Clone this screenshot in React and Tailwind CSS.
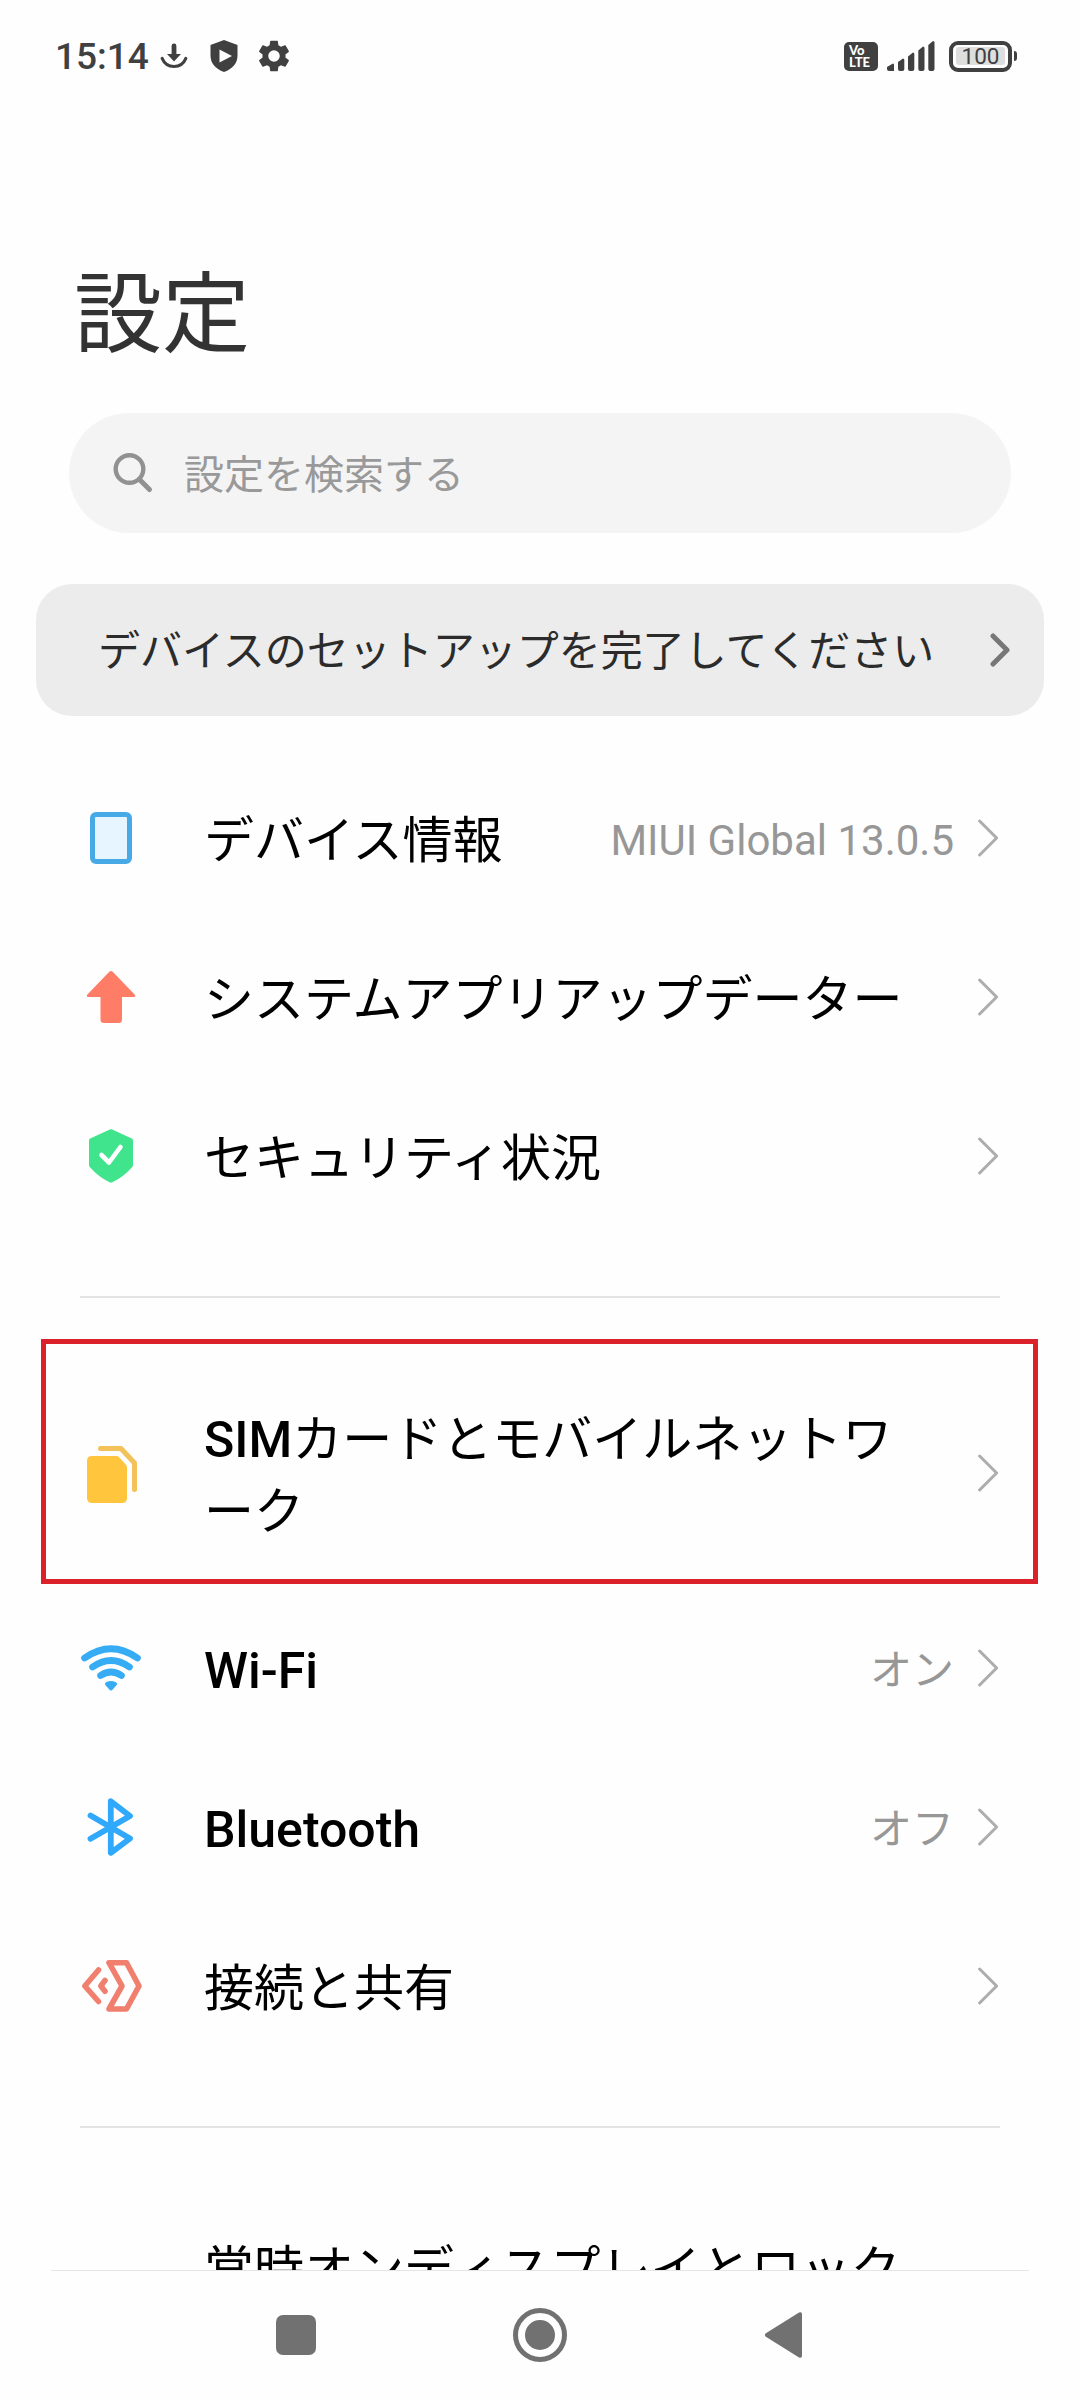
const DeviceIcon = () => (
  <svg viewBox="0 0 64 64" className="h-16 w-16">
    <rect x="13.5" y="8.5" width="37" height="47" rx="3.5" fill="#e6f5ff" stroke="#47a9e5" strokeWidth="5" />
  </svg>
)

const UpdateIcon = () => (
  <svg viewBox="0 0 64 64" className="h-16 w-16" fill="#ff7c66">
    <path d="M30.3 6.8Q32 5.2 33.7 6.8L55.6 29.4Q57.4 32 54.5 32H43V54.5Q43 58 39.5 58H25Q21.5 58 21.5 54.5V32H9.5Q6.6 32 8.4 29.4Z" />
  </svg>
)

const SecurityIcon = () => (
  <svg viewBox="0 0 64 64" className="h-16 w-16">
    <path
      d="M30.8 5.6Q32 5 33.2 5.6L52.8 14.6Q54 15.2 54 16.6V41Q54 42.6 52.8 43.6Q44 53.5 33.4 58.3Q32 59 30.6 58.3Q20 53.5 11.2 43.6Q10 42.6 10 41V16.6Q10 15.2 11.2 14.6Z"
      fill="#40e48c"
    />
    <path d="M22.5 31L30 38.5L41.5 23" fill="none" stroke="#fff" strokeWidth="4.6" strokeLinecap="round" strokeLinejoin="round" />
  </svg>
)

const SimIcon = () => (
  <svg viewBox="0 0 64 64" className="h-16 w-16">
    <path d="M13 15H37Q39 15 40.4 16.4L46.6 23.2Q48 24.6 48 26.6V57Q48 62 43 62H13Q8 62 8 57V20Q8 15 13 15Z" fill="#ffc53d" />
    <path d="M21.5 7.5H42L55.5 22V48.5" fill="none" stroke="#f3c25a" strokeWidth="5" strokeLinecap="round" strokeLinejoin="round" />
  </svg>
)

const WifiIcon = () => (
  <svg viewBox="0 0 64 64" className="h-16 w-16" fill="none" stroke="#36acf5" strokeWidth="6.8" strokeLinecap="round">
    <path d="M5.6 22Q32 3.5 58.4 22" />
    <path d="M13.6 31Q32 18 50.4 31" />
    <path d="M21.6 39.5Q32 32.5 42.4 39.5" />
    <path d="M28 48Q32 46 36 48L32 52.5Z" strokeWidth="4" strokeLinejoin="round" fill="#36acf5" />
  </svg>
)

const BluetoothIcon = () => (
  <svg viewBox="0 0 64 64" className="h-16 w-16">
    <path
      d="M11.5 20.5L51 43.5L31.8 57.8V6.2L51 21L11.5 43.8"
      fill="none"
      stroke="#30a8fb"
      strokeWidth="5.8"
      strokeLinecap="round"
      strokeLinejoin="round"
    />
  </svg>
)

const ShareIcon = () => (
  <svg
    viewBox="0 0 64 64"
    className="h-16 w-16"
    fill="none"
    stroke="#f17f6e"
    strokeWidth="5.6"
    strokeLinecap="round"
    strokeLinejoin="round"
  >
    <path d="M19.5 16L5.8 32L19.5 47.5" />
    <path d="M26 26.5L21.8 32L26 37.2" />
    <path d="M30 8.7H47.5L60 32L47.5 55H30L43 32Z" />
  </svg>
)

const Chevron = () => (
  <svg
    viewBox="0 0 22 40"
    className="h-10 w-[22px] shrink-0"
    fill="none"
    stroke="#adadad"
    strokeWidth="3"
    strokeLinecap="round"
    strokeLinejoin="round"
  >
    <path d="M1.6 3L18.6 20L1.6 37" />
  </svg>
)

const StatusBar = () => (
  <header className="flex h-28 items-center justify-between pl-[55px] pr-[63px] text-[#404040]">
    <div className="flex items-center">
      <span className="w-[105px] pt-px text-[37px] leading-none font-medium whitespace-nowrap">15:14</span>
      <svg viewBox="0 0 28 26" className="h-[26px] w-7" fill="none" stroke="currentColor" strokeLinecap="round">
        <path d="M14 3V13" strokeWidth="4.8" />
        <path d="M7 11H21L14 18.5Z" fill="currentColor" stroke="none" />
        <path d="M2.2 15.5Q5.5 23.5 14 23.5Q22.5 23.5 25.8 15.5" strokeWidth="3.2" />
      </svg>
      <svg viewBox="0 0 28 34" className="ml-[22px] h-[34px] w-7">
        <path d="M14 1L27.5 6V16.5Q27.5 28 14 33Q.5 28 .5 16.5V6Z" fill="currentColor" />
        <path d="M9.5 10.5L22 17L9.5 23.5Z" fill="#fefefe" />
      </svg>
      <svg viewBox="2 2 20 20" className="ml-5 h-8 w-8" fill="currentColor">
        <path d="M19.14 12.94c.04-.3.06-.61.06-.94s-.02-.64-.07-.94l2.03-1.58a.49.49 0 0 0 .12-.61l-1.92-3.32a.49.49 0 0 0-.59-.22l-2.39.96a7.03 7.03 0 0 0-1.62-.94l-.36-2.54A.48.48 0 0 0 13.92 2.4h-3.84a.48.48 0 0 0-.47.41l-.36 2.54c-.59.24-1.13.57-1.62.94l-2.39-.96a.49.49 0 0 0-.59.22L2.74 8.87a.48.48 0 0 0 .12.61l2.03 1.58c-.05.3-.09.63-.09.94s.02.64.07.94l-2.03 1.58a.49.49 0 0 0-.12.61l1.92 3.32c.12.22.37.29.59.22l2.39-.96c.5.38 1.03.7 1.62.94l.36 2.54c.05.24.24.41.48.41h3.84c.24 0 .44-.17.47-.41l.36-2.54a7.03 7.03 0 0 0 1.62-.94l2.39.96c.22.08.47 0 .59-.22l1.92-3.32a.48.48 0 0 0-.12-.61zM12 15.6a3.6 3.6 0 1 1 0-7.2 3.6 3.6 0 0 1 0 7.2z" />
      </svg>
    </div>
    <div className="flex items-center">
      <div className="flex h-[29px] w-[34px] flex-col justify-center rounded-[5px] bg-[#404040] pl-[5px] font-['Lato',sans-serif] text-[13px] leading-[12px] font-black text-white">
        <span>Vo</span>
        <span>LTE</span>
      </div>
      <svg viewBox="0 0 48 30" className="ml-[9px] h-[30px] w-12" fill="currentColor">
        <path d="M0 28V26L6 22.5Q7 22.5 7 24V30H2Q0 30 0 28Z" />
        <path d="M11 21L16 17.5Q17.3 17.5 17.3 19V28Q17.3 30 15.3 30H13Q11 30 11 28Z" />
        <path d="M21 15.5L26 11.5Q27.3 11.5 27.3 13V28Q27.3 30 25.3 30H23Q21 30 21 28Z" />
        <path d="M31.3 9.5L36 5.5Q37.5 5.5 37.5 7V28Q37.5 30 35.5 30H33.3Q31.3 30 31.3 28Z" />
        <path d="M41.3 4L46 0Q47.5 0 47.5 1.5V28Q47.5 30 45.5 30H43.3Q41.3 30 41.3 28Z" />
      </svg>
      <div className="ml-[14px] flex h-[31px] w-[63px] items-center rounded-[9px] border-4 border-[#404040] p-[3px]">
        <span className="flex h-[18px] w-full items-center justify-center rounded-[3px] bg-[#dedede] text-[22.5px] leading-none">
          100
        </span>
      </div>
      <span className="ml-0.5 h-[10px] w-[3px] rounded-r-sm bg-[#404040]" />
    </div>
  </header>
)

const SettingsRow = ({ icon, label, value, chevron = true }) => (
  <li className="flex h-[159px] items-center pr-20 pl-[79px]">
    {icon}
    <span className="ml-[61px] flex-1 pt-[7px] text-[50px] leading-[72px] whitespace-nowrap text-black">{label}</span>
    {value && <span className="mr-6 pt-[7px] text-[42px] leading-none text-[#979797]">{value}</span>}
    {chevron && <Chevron />}
  </li>
)

const Divider = () => <hr className="mx-20 mt-[61px] mb-[59px] h-0.5 border-0 bg-[#e4e4e4]" />

const NavBar = () => (
  <nav className="flex h-[130px] flex-col">
    <div className="mx-[51px] h-px bg-[#e6e6e6]" />
    <div className="flex flex-1 items-center pb-0.5 pl-[276px]">
      <div className="h-10 w-10 rounded-[7px] bg-[#717171]" />
      <div className="ml-[197px] flex h-[54px] w-[54px] items-center justify-center rounded-full border-[5px] border-[#717171]">
        <div className="h-[30px] w-[30px] rounded-full bg-[#717171]" />
      </div>
      <svg viewBox="0 0 38 48" className="ml-[197px] h-12 w-[38px]" fill="#717171">
        <path d="M1.5 22.5L35 1.5Q38 .5 38 3V45Q38 47.5 35 46.5L1.5 25.5Q0 24 1.5 22.5Z" />
      </svg>
    </div>
  </nav>
)

const App = () => {
  return (
    <div
      lang="ja"
      className="h-[2400px] w-[1080px] overflow-hidden bg-[#fefefe] font-['Roboto','Noto_Sans_CJK_JP',sans-serif]"
    >
      <main className="h-[2270px] overflow-hidden">
        <StatusBar />

        <h1 className="mt-[139px] ml-[74px] text-[88px] leading-[128px] text-[#333]">設定</h1>

        {/* Search */}
        <div className="mx-[69px] mt-[34px] flex h-[120px] items-center rounded-full bg-[#f4f4f4] pl-[44px]">
          <svg viewBox="0 0 42 42" className="h-[42px] w-[42px]" fill="none" stroke="#919191" strokeWidth="4.4">
            <circle cx="16.5" cy="17" r="13.8" />
            <path d="M26.5 27.5L36.5 37.5" strokeWidth="5" strokeLinecap="round" />
          </svg>
          <span className="ml-[29px] pt-[5px] text-[40px] leading-none text-[#999]">設定を検索する</span>
        </div>

        {/* Setup reminder */}
        <div className="mx-9 mt-[51px] flex h-[132px] items-center justify-between rounded-[36px] bg-[#ececec] pr-8 pl-[62px]">
          <span className="pt-[3px] text-[42px] leading-none whitespace-nowrap text-[#2b2b2b]">
            デバイスのセットアップを完了してください
          </span>
          <svg
            viewBox="0 0 22 36"
            className="h-9 w-[22px]"
            fill="none"
            stroke="#777"
            strokeWidth="5"
            strokeLinecap="round"
            strokeLinejoin="round"
          >
            <path d="M3 4L17 18L3 32" />
          </svg>
        </div>

        <ul className="mt-[42px]">
          <SettingsRow icon={<DeviceIcon />} label="デバイス情報" value="MIUI Global 13.0.5" />
          <SettingsRow icon={<UpdateIcon />} label="システムアプリアップデーター" />
          <SettingsRow icon={<SecurityIcon />} label="セキュリティ状況" />
        </ul>

        <Divider />

        <ul>
          <li className="relative flex h-[231px] items-center pr-20 pl-[79px]">
            <SimIcon />
            <span className="ml-[61px] flex-1 pt-[6px] text-[50px] leading-[72px] text-black">
              <span className="font-medium">SIM</span>カードとモバイルネットワ
              <br />
              ーク
            </span>
            <Chevron />
            <div className="absolute top-[-18px] left-[41px] h-[245px] w-[997px] border-[5px] border-[#db222a]" />
          </li>
          <SettingsRow icon={<WifiIcon />} label={<span className="font-medium">Wi-Fi</span>} value="オン" />
          <SettingsRow icon={<BluetoothIcon />} label={<span className="font-medium">Bluetooth</span>} value="オフ" />
          <SettingsRow icon={<ShareIcon />} label="接続と共有" />
        </ul>

        <Divider />

        <ul>
          <SettingsRow icon={<span className="w-16" />} label="常時オンディスプレイとロック" chevron={false} />
        </ul>
      </main>

      <NavBar />
    </div>
  )
}

export default App
